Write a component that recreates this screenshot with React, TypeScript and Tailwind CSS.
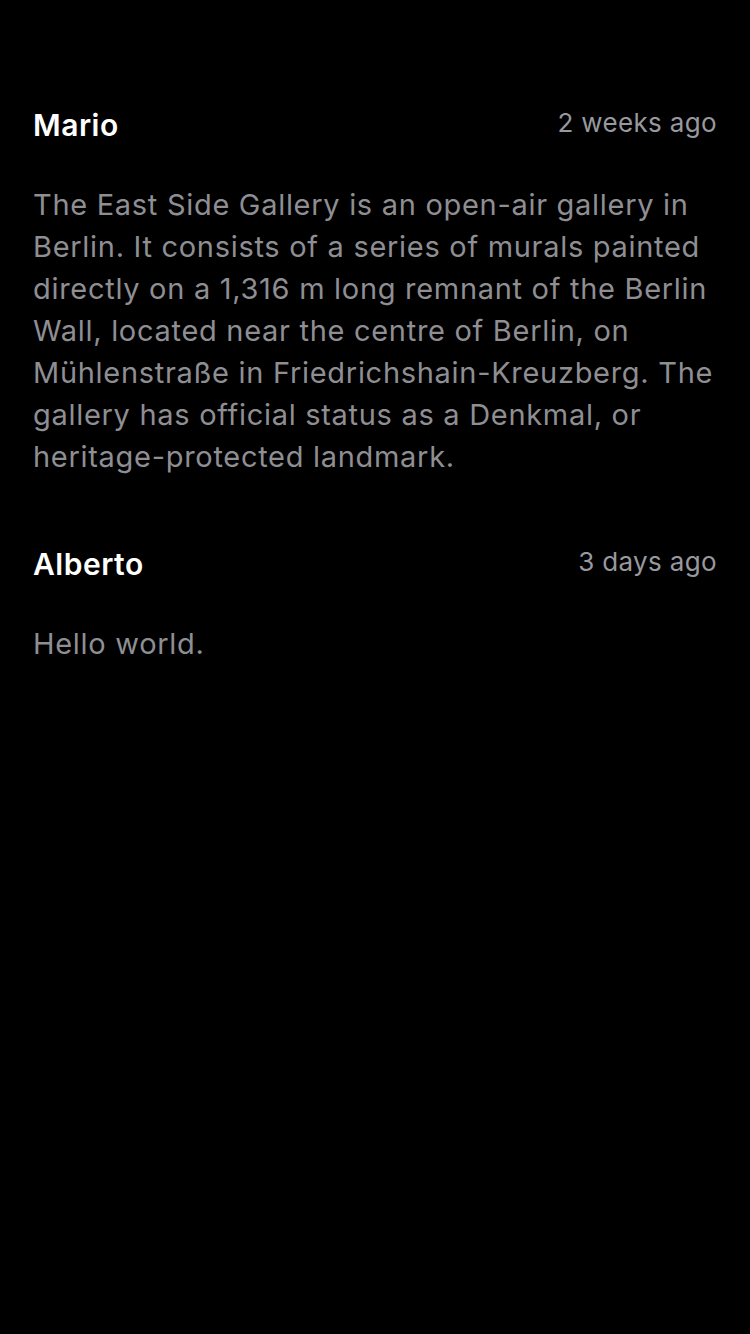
import React from "react";

const comments = [
  {
    id: 1,
    author: "Mario",
    time: "2 weeks ago",
    body: "The East Side Gallery is an open-air gallery in Berlin. It consists of a series of murals painted directly on a 1,316 m long remnant of the Berlin Wall, located near the centre of Berlin, on Mühlenstraße in Friedrichshain-Kreuzberg. The gallery has official status as a Denkmal, or heritage-protected landmark.",
  },
  { id: 2, author: "Alberto", time: "3 days ago", body: "Hello world." },
];

export default function App() {
  return (
    <div
      className="min-h-[1334px] w-[750px] bg-black px-[33px] pt-[107px]"
      style={{ fontFamily: "Inter, 'Noto Sans', sans-serif" }}
    >
      <div className="flex flex-col gap-[68px]">
        {comments.map((c) => (
          <div key={c.id} className="flex flex-col gap-[41px]">
            <div className="flex h-[36px] items-start justify-between">
              <span className="text-[30px] leading-[36px] font-semibold tracking-[0.5px] text-white">{c.author}</span>
              <span className="text-[26px] leading-[31px] tracking-[0.35px] text-[#98989f]">{c.time}</span>
            </div>
            <p className="text-[29px] leading-[42px] tracking-[0.7px] text-[#8e8e93]">{c.body}</p>
          </div>
        ))}
      </div>
    </div>
  );
}
